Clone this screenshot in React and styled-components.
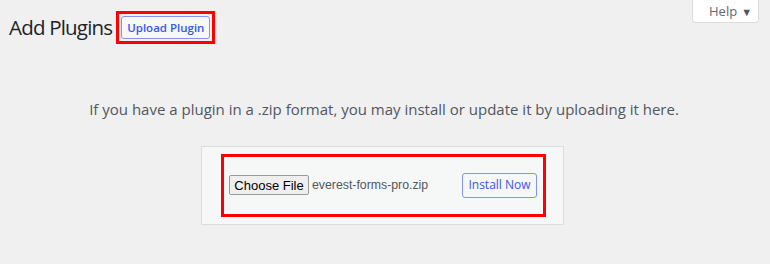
import React from "react";
import styled, { createGlobalStyle } from "styled-components";

const GlobalStyle = createGlobalStyle`
	html, body {
		margin: 0;
		padding: 0;
		background: #f0f0f1;
		font-family: "Open Sans", "Noto Sans", sans-serif;
	}
`;

const Page = styled.div`
	width: 770px;
	height: 264px;
	padding: 0 11px 0 9px;
	box-sizing: border-box;
	overflow: hidden;
`;

const TopRow = styled.div`
	display: flex;
	justify-content: space-between;
	align-items: flex-start;
`;

const TitleRow = styled.div`
	display: flex;
	align-items: center;
	gap: 4px;
	padding-top: 11px;
`;

const Title = styled.h1`
	margin: 0;
	font-size: 20.5px;
	font-weight: 400;
	letter-spacing: -0.8px;
	color: #1d2327;
	line-height: 1;
`;

const Highlight = styled.div`
	display: flex;
	align-items: center;
	justify-content: ${(p) => (p.$spread ? "space-between" : "flex-start")};
	border: 3px solid #ff0000;
	padding: ${(p) => p.$pad || "2px"};
	box-sizing: border-box;
	width: ${(p) => p.$width || "auto"};
`;

const ActionButton = styled.button`
	font-family: "Open Sans", "Noto Sans", sans-serif;
	font-size: ${(p) => p.$size || "11.5px"};
	font-weight: ${(p) => p.$weight || 600};
	color: #3858e9;
	background: #f6f7f7;
	border: 1px solid #8494ee;
	border-radius: 3px;
	width: ${(p) => p.$w || "89px"};
	height: ${(p) => p.$h || "23px"};
	padding: 0;
	line-height: 1;
	cursor: pointer;
`;

const HelpTab = styled.div`
	display: flex;
	align-items: center;
	gap: 4px;
	width: 67px;
	height: 23px;
	box-sizing: border-box;
	padding-left: 16px;
	background: #fff;
	border: 1px solid #dcdcde;
	border-top: none;
	border-radius: 0 0 4px 4px;
	font-size: 13px;
	color: #646970;
`;

const Caret = styled.span`
	font-size: 11px;
	color: #50575e;
`;

const Description = styled.p`
	margin: 54px 0 0;
	text-align: center;
	font-size: 15px;
	color: #50575e;
	line-height: 1.5;
`;

const FormWrap = styled.div`
	display: flex;
	justify-content: center;
	margin-top: 25px;
	padding-right: 3px;
`;

const UploadForm = styled.div`
	width: 363px;
	height: 79px;
	box-sizing: border-box;
	background: #f6f7f7;
	border: 1px solid #dcdcde;
	padding: 7px 17px 7px 19px;
	display: flex;
`;

const FileGroup = styled.div`
	display: flex;
	align-items: center;
	gap: 3px;
	font-family: "Liberation Sans", Arial, sans-serif;
	font-size: 12.3px;
	color: #50575e;
`;

const FileButton = styled.button`
	font-family: "Liberation Sans", Arial, sans-serif;
	font-size: 13px;
	color: #000;
	background: #efefef;
	border: 1px solid #9a9a9a;
	border-radius: 2px;
	width: 80px;
	height: 20px;
	padding: 0;
`;

export default function App() {
	return (
		<>
			<GlobalStyle />
			<Page>
				<TopRow>
					<TitleRow>
						<Title>Add Plugins</Title>
						<Highlight>
							<ActionButton>Upload Plugin</ActionButton>
						</Highlight>
					</TitleRow>
					<HelpTab>
						Help <Caret>▼</Caret>
					</HelpTab>
				</TopRow>
				<Description>
					If you have a plugin in a .zip format, you may install or update it by uploading it here.
				</Description>
				<FormWrap>
					<UploadForm>
						<Highlight $spread $pad="0 6px 0 5px" $width="325px">
							<FileGroup>
								<FileButton>Choose File</FileButton>
								<span>everest-forms-pro.zip</span>
							</FileGroup>
							<ActionButton $w="75px" $h="25px" $weight={400} $size="12px">
								Install Now
							</ActionButton>
						</Highlight>
					</UploadForm>
				</FormWrap>
			</Page>
		</>
	);
}
